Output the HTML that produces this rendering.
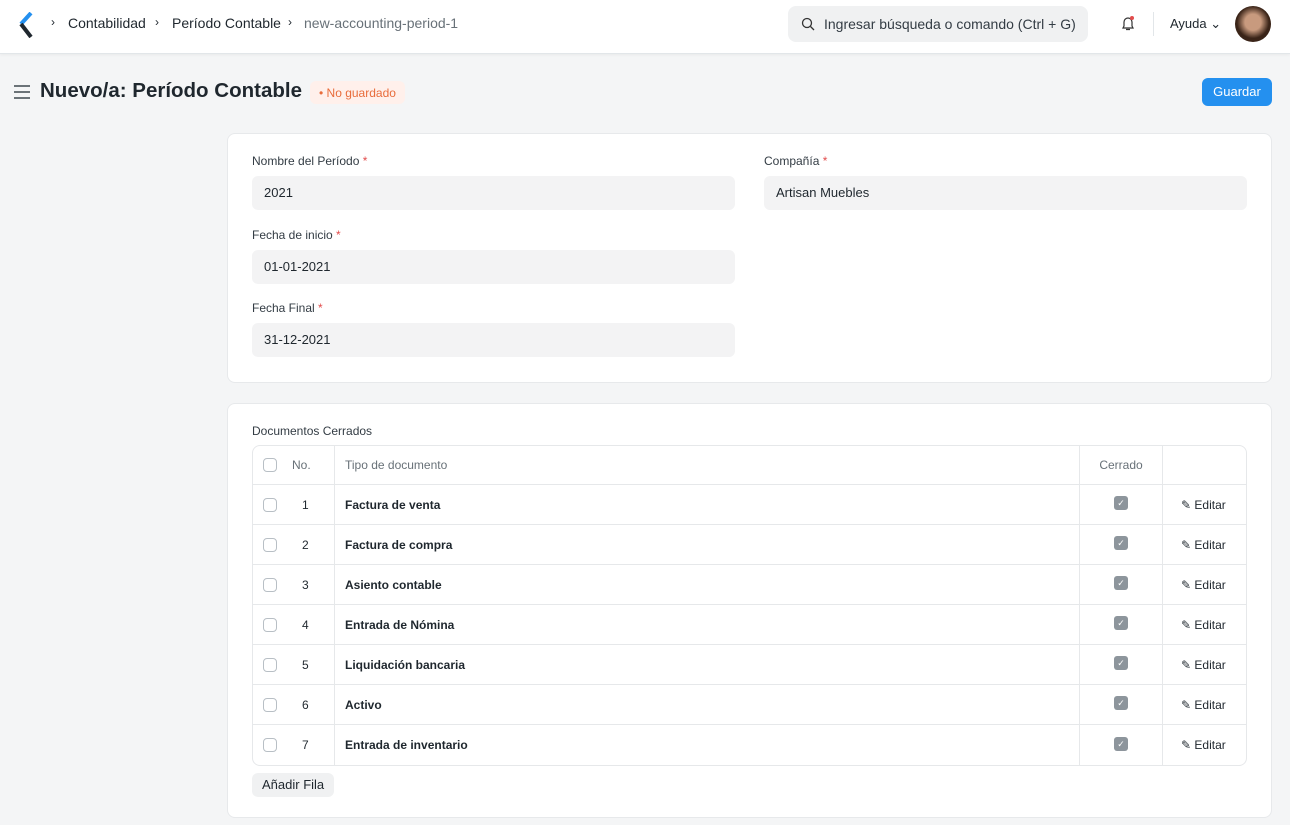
<!DOCTYPE html>
<html><head><meta charset="utf-8"><style>
*{box-sizing:border-box;margin:0;padding:0}
body{width:1290px;height:825px;background:#f4f5f6;font-family:"Liberation Sans",sans-serif;color:#1f272e;font-size:13px;overflow:hidden;position:relative}
.nav{position:absolute;top:0;left:0;width:1290px;height:54px;background:#fff;border-bottom:1px solid #e2e6e9;box-shadow:0 1px 3px rgba(0,0,0,.05)}
.abs{position:absolute}
.crumb{top:15px;font-size:14px;color:#1f272e}
.search{left:788px;top:6px;width:300px;height:36px;background:#f0f1f2;border-radius:8px}
.card{position:absolute;left:227px;width:1045px;background:#fff;border:1px solid #e7e9eb;border-radius:8px}
.lbl{position:absolute;font-size:12px;color:#333c44}
.lbl b{color:#e24c4c;font-weight:normal}
.inp{position:absolute;height:34px;background:#f3f3f4;border-radius:6px;font-size:13px;padding:9px 12px;color:#1f272e}
table{position:absolute;left:24px;top:41px;width:995px;border-collapse:separate;border-spacing:0;border:1px solid #e6e8ea;border-radius:8px}
td{height:40px;border-bottom:1px solid #e6e8ea;border-right:1px solid #e6e8ea;font-size:12px}
tr:last-child td{border-bottom:none}
td:last-child{border-right:none}
td:first-child{border-right:none}
tr:first-child td{height:39px}
td.n{padding-left:15px}
.cb{display:inline-block;width:14px;height:14px;border:1px solid #b8bfc5;border-radius:4px;vertical-align:middle}
.ck{display:inline-block;width:14px;height:14px;background:#8d959c;border-radius:3px;color:#fff;font-size:9px;line-height:14px;text-align:center;position:relative;top:-2px}
</style></head><body>
<div class="nav">
<svg class="abs" style="left:17px;top:12px" width="16" height="26" viewBox="0 0 16 26"><path d="M14 1 L4 12" stroke="#2490ef" stroke-width="4"/><path d="M4 12 L14 25" stroke="#1f272e" stroke-width="4"/></svg>
<div class="abs crumb" style="left:51px;font-size:12px">&#8250;</div>
<div class="abs crumb" style="left:68px">Contabilidad</div>
<div class="abs crumb" style="left:155px;font-size:12px">&#8250;</div>
<div class="abs crumb" style="left:172px">Período Contable</div>
<div class="abs crumb" style="left:288px;font-size:12px">&#8250;</div>
<div class="abs crumb" style="left:304px;color:#687178">new-accounting-period-1</div>
<div class="abs search"><svg class="abs" style="left:13px;top:11px" width="14" height="14" viewBox="0 0 14 14"><circle cx="6" cy="6" r="4.5" stroke="#333" fill="none" stroke-width="1.3"/><path d="M9.5 9.5L13 13" stroke="#333" stroke-width="1.3"/></svg><div class="abs" style="left:36px;top:10px;font-size:14px;color:#333c44">Ingresar búsqueda o comando (Ctrl + G)</div></div>
<svg class="abs" style="left:1119px;top:14px" width="18" height="18" viewBox="0 0 18 18"><path d="M4 14 L5 12 V8 a4 4 0 0 1 8 0 V12 L14 14 Z M7 15.5 h4" stroke="#333" fill="none" stroke-width="1.2"/><circle cx="13" cy="4" r="2" fill="#e24c4c"/></svg>
<div class="abs" style="left:1153px;top:12px;width:1px;height:24px;background:#e2e6e9"></div>
<div class="abs" style="left:1170px;top:16px;font-size:13px">Ayuda &#8964;</div>
<div class="abs" style="left:1235px;top:6px;width:36px;height:36px;border-radius:50%;background:radial-gradient(circle at 50% 45%,#c89a7e 0 30%,#3a2418 60%)"></div>
</div>
<div class="abs" style="left:14px;top:85px;width:16px"><div style="height:2px;background:#6b7378;margin-bottom:4px"></div><div style="height:2px;background:#6b7378;margin-bottom:4px"></div><div style="height:2px;background:#6b7378"></div></div>
<div class="abs" style="left:40px;top:79px;font-size:20.5px;font-weight:bold">Nuevo/a: Período Contable</div>
<div class="abs" style="left:310px;top:81px;height:23px;padding:5px 9px;background:#fff0eb;border-radius:6px;font-size:12px;color:#e86c3b">• No guardado</div>
<div class="abs" style="left:1202px;top:78px;width:70px;height:28px;background:#2490ef;border-radius:6px;color:#fff;font-size:13px;text-align:center;line-height:28px">Guardar</div>

<div class="card" style="top:133px;height:250px">
<div class="lbl" style="left:24px;top:20px">Nombre del Período <b>*</b></div>
<div class="inp" style="left:24px;top:42px;width:483px">2021</div>
<div class="lbl" style="left:536px;top:20px">Compañía <b>*</b></div>
<div class="inp" style="left:536px;top:42px;width:483px">Artisan Muebles</div>
<div class="lbl" style="left:24px;top:94px">Fecha de inicio <b>*</b></div>
<div class="inp" style="left:24px;top:116px;width:483px">01-01-2021</div>
<div class="lbl" style="left:24px;top:167px">Fecha Final <b>*</b></div>
<div class="inp" style="left:24px;top:189px;width:483px">31-12-2021</div>
</div>

<div class="card" style="top:403px;height:415px">
<div class="lbl" style="left:24px;top:20px">Documentos Cerrados</div>
<table>
<tr><td style="width:34px;text-align:center"><span class="cb"></span></td><td style="width:48px;color:#687178;padding-left:5px">No.</td><td style="padding-left:10px;color:#687178">Tipo de documento</td><td style="width:83px;text-align:center;color:#687178">Cerrado</td><td style="width:83px"></td></tr>
<tr><td style="text-align:center"><span class="cb"></span></td><td class="n">1</td><td style="padding-left:10px;font-weight:bold">Factura de venta</td><td style="text-align:center"><span class="ck">✓</span></td><td style="padding-left:18px">✎ Editar</td></tr>
<tr><td style="text-align:center"><span class="cb"></span></td><td class="n">2</td><td style="padding-left:10px;font-weight:bold">Factura de compra</td><td style="text-align:center"><span class="ck">✓</span></td><td style="padding-left:18px">✎ Editar</td></tr>
<tr><td style="text-align:center"><span class="cb"></span></td><td class="n">3</td><td style="padding-left:10px;font-weight:bold">Asiento contable</td><td style="text-align:center"><span class="ck">✓</span></td><td style="padding-left:18px">✎ Editar</td></tr>
<tr><td style="text-align:center"><span class="cb"></span></td><td class="n">4</td><td style="padding-left:10px;font-weight:bold">Entrada de Nómina</td><td style="text-align:center"><span class="ck">✓</span></td><td style="padding-left:18px">✎ Editar</td></tr>
<tr><td style="text-align:center"><span class="cb"></span></td><td class="n">5</td><td style="padding-left:10px;font-weight:bold">Liquidación bancaria</td><td style="text-align:center"><span class="ck">✓</span></td><td style="padding-left:18px">✎ Editar</td></tr>
<tr><td style="text-align:center"><span class="cb"></span></td><td class="n">6</td><td style="padding-left:10px;font-weight:bold">Activo</td><td style="text-align:center"><span class="ck">✓</span></td><td style="padding-left:18px">✎ Editar</td></tr>
<tr><td style="text-align:center"><span class="cb"></span></td><td class="n">7</td><td style="padding-left:10px;font-weight:bold">Entrada de inventario</td><td style="text-align:center"><span class="ck">✓</span></td><td style="padding-left:18px">✎ Editar</td></tr>
</table>
<div class="abs" style="left:24px;top:369px;height:24px;padding:0 10px;background:#f0f1f2;border-radius:6px;font-size:13px;line-height:24px">Añadir Fila</div>
</div>
</body></html>
